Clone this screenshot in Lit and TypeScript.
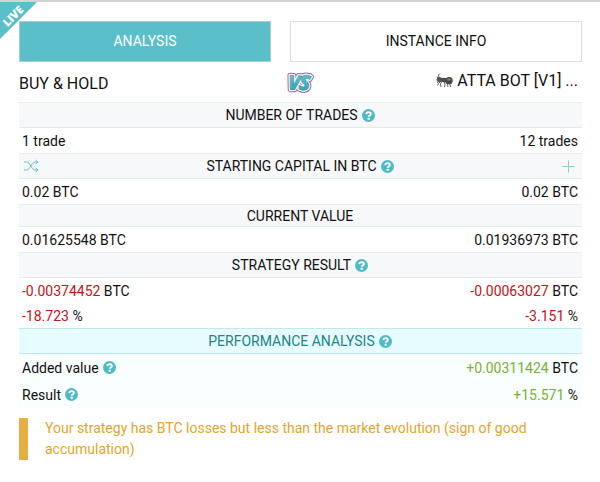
import { LitElement, html, css, svg, nothing } from "lit";
import { customElement, property, state } from "lit/decorators.js";
import { classMap } from "lit/directives/class-map.js";

type Cell = { value: string; unit?: string; tone?: "loss" | "gain"; help?: boolean };
type Row = { left: Cell; right: Cell };
type Section = {
  title: string;
  size: "short" | "tall";
  help?: boolean;
  tools?: boolean;
  highlight?: boolean;
  rows: Row[];
};

const SECTIONS: Section[] = [
  {
    title: "NUMBER OF TRADES",
    size: "tall",
    help: true,
    rows: [{ left: { value: "1 trade" }, right: { value: "12 trades" } }],
  },
  {
    title: "STARTING CAPITAL IN BTC",
    size: "tall",
    help: true,
    tools: true,
    rows: [{ left: { value: "0.02", unit: "BTC" }, right: { value: "0.02", unit: "BTC" } }],
  },
  {
    title: "CURRENT VALUE",
    size: "short",
    rows: [{ left: { value: "0.01625548", unit: "BTC" }, right: { value: "0.01936973", unit: "BTC" } }],
  },
  {
    title: "STRATEGY RESULT",
    size: "tall",
    help: true,
    rows: [
      {
        left: { value: "-0.00374452", unit: "BTC", tone: "loss" },
        right: { value: "-0.00063027", unit: "BTC", tone: "loss" },
      },
      {
        left: { value: "-18.723", unit: "%", tone: "loss" },
        right: { value: "-3.151", unit: "%", tone: "loss" },
      },
    ],
  },
  {
    title: "PERFORMANCE ANALYSIS",
    size: "tall",
    help: true,
    highlight: true,
    rows: [
      { left: { value: "Added value", help: true }, right: { value: "+0.00311424", unit: "BTC", tone: "gain" } },
      { left: { value: "Result", help: true }, right: { value: "+15.571", unit: "%", tone: "gain" } },
    ],
  },
];

@customElement("help-button")
class HelpButton extends LitElement {
  @property() topic = "";

  static styles = css`
    :host {
      display: inline-flex;
    }
    button {
      display: flex;
      padding: 0;
      border: 0;
      background: none;
      cursor: pointer;
    }
    svg {
      width: 13px;
      height: 13px;
    }
  `;

  render() {
    return html`<button type="button" aria-label="Help: ${this.topic}">
      <svg viewBox="0 0 26 26" aria-hidden="true">
        <circle cx="13" cy="13" r="13" fill="#4fbac6" />
        <path d="M8.6 10.2c.4-2.8 2.2-4 4.6-4 2.6 0 4.5 1.5 4.5 3.7 0 3.2-4.2 3-4.2 5.6" fill="none" stroke="#fff" stroke-width="3.8" />
        <rect x="11.3" y="17.4" width="4.4" height="4" rx="1" fill="#fff" />
      </svg>
    </button>`;
  }
}

@customElement("comparison-table")
class ComparisonTable extends LitElement {
  static styles = css`
    :host {
      display: block;
    }
    table {
      width: 100%;
      border-collapse: collapse;
      table-layout: fixed;
    }
    th,
    td {
      padding: 0 4px 0 3px;
      font-weight: 400;
      line-height: 20px;
      white-space: nowrap;
    }
    .section th {
      height: 24px;
      background: #f6f8fa;
      border-top: 1px solid #e6eeef;
      border-bottom: 1px solid #e3ebec;
    }
    .section.short th {
      height: 21px;
    }
    .bar {
      display: grid;
      grid-template-columns: 1fr auto 1fr;
      align-items: center;
    }
    .title {
      grid-column: 2;
      display: flex;
      align-items: center;
      gap: 4px;
    }
    .tool {
      display: flex;
      padding: 0;
      border: 0;
      background: none;
      cursor: pointer;
    }
    .tool.add {
      grid-column: 3;
      justify-self: end;
      margin-right: 3px;
    }
    .row td {
      height: 25px;
    }
    .row td:last-child {
      text-align: right;
    }
    .label {
      display: flex;
      align-items: center;
      gap: 4px;
    }
    .loss {
      color: #c4121a;
    }
    .gain {
      color: #7cb030;
    }
    .highlight .section th {
      color: #1d8488;
      background: #e6fcfe;
      border-color: #bfe9ea;
    }
    .highlight .row td {
      height: 27px;
      background: #f9feff;
    }
  `;

  private cell(c: Cell) {
    if (c.help) {
      return html`<span class="label">${c.value}<help-button topic=${c.value}></help-button></span>`;
    }
    const tone = { loss: c.tone === "loss", gain: c.tone === "gain" };
    return html`<span class=${classMap(tone)}>${c.value}</span>${c.unit ? ` ${c.unit}` : nothing}`;
  }

  private section(s: Section) {
    return html`<tbody class=${classMap({ highlight: !!s.highlight })}>
      <tr class=${classMap({ section: true, short: s.size === "short" })}>
        <th colspan="2" scope="rowgroup">
          <div class="bar">
            ${s.tools
              ? html`<button class="tool" type="button" aria-label="Switch currency">
                  <svg width="18" height="14" viewBox="0 0 18 14" fill="none" stroke="#65c2c5" aria-hidden="true">
                    <path d="M2 3h2.500c4 0 4.500 8 9 8h2M2 11h2.500c4 0 4.500-8 9-8h2M13.500 1l2.500 2-2.500 2M13.500 9l2.500 2-2.500 2" />
                  </svg>
                </button>`
              : nothing}
            <span class="title">
              ${s.title}${s.help ? html`<help-button topic=${s.title}></help-button>` : nothing}
            </span>
            ${s.tools
              ? html`<button class="tool add" type="button" aria-label="Add capital">
                  <svg width="13" height="13" viewBox="0 0 13 13" stroke="#8ccfd2" aria-hidden="true">
                    <path d="M6.500 0.500v12M0.500 6.500h12" />
                  </svg>
                </button>`
              : nothing}
          </div>
        </th>
      </tr>
      ${s.rows.map((r) => html`<tr class="row"><td>${this.cell(r.left)}</td><td>${this.cell(r.right)}</td></tr>`)}
    </tbody>`;
  }

  render() {
    return html`<table aria-label="Strategy comparison">${SECTIONS.map((s) => this.section(s))}</table>`;
  }
}

@customElement("app-root")
class AppRoot extends LitElement {
  @state() private tab = "analysis";

  static styles = css`
    :host {
      display: block;
      position: relative;
      box-sizing: border-box;
      padding: 19px 18px 22px 19px;
      overflow: hidden;
      border-top: 2px solid #d3d3d5;
      color: #111;
      background: #fff;
      font: 14px/20px Roboto, sans-serif;
    }
    .ribbon {
      position: absolute;
      top: 0;
      left: 0;
      width: 37px;
      height: 37px;
      overflow: hidden;
      clip-path: polygon(0 0, 100% 0, 0 100%);
      background: #5abfc9;
    }
    .ribbon span {
      position: absolute;
      top: 8px;
      left: -7px;
      width: 40px;
      color: #fff;
      font: 800 11px/12px "Open Sans", sans-serif;
      text-align: center;
      transform: rotate(-45deg);
    }
    .tabs {
      display: grid;
      grid-template-columns: 252fr 292fr;
      gap: 19px;
    }
    .tab {
      height: 41px;
      padding: 0 0 1px;
      border: 1px solid #dedfe1;
      background: #fff;
      color: #111;
      font: inherit;
      cursor: pointer;
    }
    .tab.active {
      border-color: #a5cfd6;
      background: #5abfc9;
      color: #fff;
    }
    .versus {
      display: grid;
      grid-template-columns: 1fr 28px 1fr;
      height: 40px;
    }
    h2 {
      margin: 0;
      font-size: 16px;
      line-height: 20px;
      font-weight: 400;
      white-space: nowrap;
    }
    .baseline {
      padding-top: 12px;
    }
    .bot {
      display: flex;
      justify-content: flex-end;
      gap: 4px;
      padding: 9px 4px 0 0;
    }
    .vs {
      margin-top: 7px;
    }
    .notice {
      margin: 10px 0 0;
      padding: 0 40px 0 17px;
      border-left: 9px solid #e5b040;
      color: #e2a52d;
      line-height: 21px;
    }
  `;

  private tabButton(id: string, label: string) {
    const active = this.tab === id;
    return html`<button
      class=${classMap({ tab: true, active })}
      type="button"
      role="tab"
      aria-selected=${active}
      @click=${() => (this.tab = id)}
    >${label}</button>`;
  }

  private vsGlyphs(fill: string, stroke: string, width: number) {
    return svg`<g fill=${fill} stroke=${stroke} stroke-width=${width} stroke-linejoin="round"
      font-family="Open Sans, sans-serif" font-weight="800" font-style="italic">
      <text x="1" y="21" font-size="20" transform="rotate(3 8 14)">V</text>
      <text x="12" y="21" font-size="21" transform="rotate(6 17 14)">S</text>
    </g>`;
  }

  render() {
    return html`
      <div class="ribbon"><span>LIVE</span></div>
      <div class="tabs" role="tablist">
        ${this.tabButton("analysis", "ANALYSIS")}${this.tabButton("instance", "INSTANCE INFO")}
      </div>
      <div class="versus">
        <h2 class="baseline">BUY &amp; HOLD</h2>
        <svg class="vs" width="28" height="27" viewBox="0 0 28 27" role="img" aria-label="versus">
          <defs>
            <linearGradient id="teal" x1="0" y1="0" x2="0" y2="1">
              <stop offset="0" stop-color="#75d0d8" />
              <stop offset="1" stop-color="#2799a5" />
            </linearGradient>
          </defs>
          ${this.vsGlyphs("#9158ae", "#9158ae", 5)} ${this.vsGlyphs("#fff", "#fff", 3)}
          ${this.vsGlyphs("url(#teal)", "#3d8797", 0.5)}
        </svg>
        <h2 class="bot">
          <svg width="17" height="20" viewBox="0 0 17 20" aria-hidden="true">
            <g fill="none" stroke="#666">
              <path d="M3 7L2.500 4 4 2.500M2 8L1 5.500M5 10l-2.500 2.500-1 2M6 10l-1.500 3 .5 3M8 10l1 3-.5 3M9 10l2.500 3 .5 3M11 11l3 2 .5 3M4 10l-3 2" />
            </g>
            <ellipse cx="3.500" cy="8.500" rx="3" ry="2.500" fill="#555" />
            <ellipse cx="8" cy="9" rx="2.700" ry="2.300" fill="#4a4a4a" />
            <ellipse cx="13" cy="9.700" rx="3.700" ry="3.600" fill="#464646" />
            <ellipse cx="12.800" cy="8.600" rx="2" ry="1" fill="#858585" />
          </svg>
          <span>ATTA BOT [V1] ...</span>
        </h2>
      </div>
      <comparison-table></comparison-table>
      <p class="notice">
        Your strategy has BTC losses but less than the market evolution (sign of good accumulation)
      </p>
    `;
  }
}
